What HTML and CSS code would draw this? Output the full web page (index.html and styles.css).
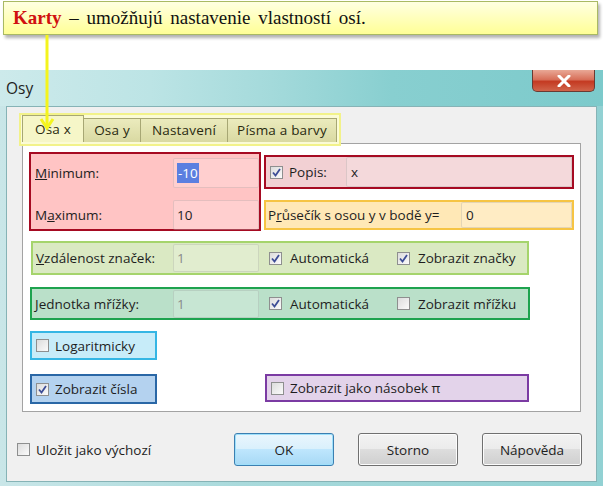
FILE: index.html
```html
<!DOCTYPE html>
<html lang="cs">
<head>
    <meta charset="UTF-8">
    <title>Osy</title>
    <link rel="stylesheet" href="styles.css">
</head>
<body>
    <div class="callout"><b>Karty</b> – umožňujú nastavenie vlastností osí.</div>
    <!-- pointer from callout to the tabs -->
    <svg class="arrow" width="16" height="98" viewBox="0 0 16 98">
        <line x1="8" y1="0" x2="8" y2="92" stroke="#f4f41e" stroke-width="3"/>
        <polyline points="2,84 8,93 14,84" fill="none" stroke="#f4f41e" stroke-width="3"/>
    </svg>

    <div class="window">
        <div class="titlebar">
            <span class="title">Osy</span>
            <div class="close">
                <svg width="16" height="12" viewBox="0 0 16 12">
                    <path d="M3 1 L13 11 M13 1 L3 11" stroke="#fff" stroke-width="3" stroke-linecap="round"/>
                </svg>
            </div>
        </div>
        <div class="client">
            <div class="tabs">
                <span class="tab active">Osa x</span>
                <span class="tab t-osy">Osa y</span>
                <span class="tab t-nast">Nastavení</span>
                <span class="tab t-pisma">Písma a barvy</span>
            </div>
            <div class="panel">
                <div class="row-top">
                    <div class="grp red minmax">
                        <div class="field">
                            <span class="lbl"><u>M</u>inimum:</span>
                            <span class="input"><span class="sel">-10</span></span>
                        </div>
                        <div class="field">
                            <span class="lbl">M<u>a</u>ximum:</span>
                            <span class="input">10</span>
                        </div>
                    </div>
                    <div class="col">
                        <div class="grp rose popis">
                            <span class="cb checked"><svg width="11" height="11" viewBox="0 0 11 11"><path d="M2 5.5 L4.5 8.5 L9 2" fill="none" stroke="#3d4d96" stroke-width="1.8"/></svg></span>
                            <span class="cb-text">Popis:</span>
                            <span class="input wide">x</span>
                        </div>
                        <div class="grp amber prusecik">
                            <span class="lbl">P<u>r</u>ůsečík s osou y v bodě y=</span>
                            <span class="input">0</span>
                        </div>
                    </div>
                </div>

                <div class="grp lime line">
                    <span class="lbl"><u>V</u>zdálenost značek:</span>
                    <span class="input off">1</span>
                    <span class="opt first"><span class="cb checked"><svg width="11" height="11" viewBox="0 0 11 11"><path d="M2 5.5 L4.5 8.5 L9 2" fill="none" stroke="#3d4d96" stroke-width="1.8"/></svg></span>Automatická</span>
                    <span class="opt"><span class="cb checked"><svg width="11" height="11" viewBox="0 0 11 11"><path d="M2 5.5 L4.5 8.5 L9 2" fill="none" stroke="#3d4d96" stroke-width="1.8"/></svg></span>Zobrazit značky</span>
                </div>

                <div class="grp green line grid-line">
                    <span class="lbl"><u>J</u>ednotka mřížky:</span>
                    <span class="input off">1</span>
                    <span class="opt first"><span class="cb checked"><svg width="11" height="11" viewBox="0 0 11 11"><path d="M2 5.5 L4.5 8.5 L9 2" fill="none" stroke="#3d4d96" stroke-width="1.8"/></svg></span>Automatická</span>
                    <span class="opt"><span class="cb"></span>Zobrazit mřížku</span>
                </div>

                <div class="grp cyan small log">
                    <span class="cb"></span><span class="cb-text">Logaritmicky</span>
                </div>

                <div class="row-bottom">
                    <div class="grp blue small">
                        <span class="cb checked"><svg width="11" height="11" viewBox="0 0 11 11"><path d="M2 5.5 L4.5 8.5 L9 2" fill="none" stroke="#3d4d96" stroke-width="1.8"/></svg></span><span class="cb-text">Zobrazit čísla</span>
                    </div>
                    <div class="grp purple pi">
                        <span class="cb"></span><span class="cb-text">Zobrazit jako násobek π</span>
                    </div>
                </div>
            </div>

            <div class="footer">
                <span class="opt"><span class="cb"></span>Uložit jako výchozí</span>
                <div class="buttons">
                    <button class="btn default">OK</button>
                    <button class="btn">Storno</button>
                    <button class="btn">Nápověda</button>
                </div>
            </div>
        </div>
    </div>
</body>
</html>
```

FILE: styles.css
```css
* {
    margin: 0;
    padding: 0;
    box-sizing: border-box;
}

body {
    width: 603px;
    height: 486px;
    overflow: hidden;
    background: #fff;
    font-family: "Open Sans", "Noto Sans", sans-serif;
    font-size: 13.5px;
    color: #1e1e1e;
    position: relative;
}

/* yellow note on top */
.callout {
    margin: 1px 5px 0 3px;
    height: 34px;
    border: 1px solid #a9b964;
    background: linear-gradient(#ffffe2, #ffff96);
    box-shadow: 2px 3px 3px rgba(0, 0, 0, 0.3);
    padding-left: 9px;
    font-family: "Liberation Serif", serif;
    font-size: 19px;
    line-height: 31px;
    word-spacing: 3px;
    color: #111;
}

.callout b {
    color: #d01010;
}

.arrow {
    position: absolute;
    left: 39px;
    top: 35px;
    z-index: 5;
}

/* dialog window */
.window {
    margin-top: 35px;
    height: 416px;
    background: linear-gradient(90deg, #c9e6e8, #a9dadc 40%, #92d1d3);
    padding: 0 6px 4px 6px;
    display: flex;
    flex-direction: column;
}

.titlebar {
    height: 36px;
    display: flex;
    justify-content: space-between;
    align-items: flex-start;
    margin: 0 -6px;
    padding: 0 8px 0 6px;
    background: linear-gradient(90deg, #cdeaeb 0%, #bce4e5 25%, #a4dadb 45%, #88cfd0 65%, #7ccacb 100%);
}

.title {
    font-size: 15.5px;
    line-height: 34px;
    padding-top: 1px;
}

.close {
    width: 63px;
    height: 22px;
    border: 1px solid #6a3a32;
    border-top: none;
    border-radius: 0 0 5px 5px;
    background: linear-gradient(#e9a896, #d8705a 45%, #c43a22 55%, #d0644a);
    display: flex;
    justify-content: center;
    align-items: center;
}

.client {
    flex: 1;
    background: #f0f0f0;
    border: 1px solid #86b3b6;
    display: flex;
    flex-direction: column;
}

/* tabs */
.tabs {
    align-self: flex-start;
    display: flex;
    align-items: flex-end;
    margin: 6px 0 -3px 12px;
    height: 33px;
    padding: 0 2px 2px 1px;
    border: 2px solid #f2f28a;
    background: #fbfbd6;
    position: relative;
    z-index: 2;
}

.tab {
    height: 24px;
    line-height: 22px;
    text-align: center;
    background: linear-gradient(#ebebbd, #d9d9a2);
    border: 1px solid #a7a774;
    border-bottom: none;
    margin-left: -1px;
    color: #2a2a10;
    letter-spacing: 0.2px;
}

.t-osy { width: 58px; }
.t-nast { width: 88px; }
.t-pisma { width: 110px; }

.tab.active {
    height: 27px;
    line-height: 27px;
    width: 62px;
    background: #f6f6c8;
    margin-left: 0;
    position: relative;
    z-index: 1;
}

.panel {
    margin: 0 15px;
    height: 269px;
    background: #fff;
    border: 1px solid #a3a3a3;
    padding: 8px 0 0 6px;
    display: flex;
    flex-direction: column;
}

.grp {
    border: 2px solid;
    display: flex;
    align-items: center;
}

.red { background: #ffc4c4; border-color: #a60a22; }
.rose { background: #f2d0d3; border-color: #a60a22; }
.amber { background: #ffe8b6; border-color: #f6c443; }
.lime { background: #dae9c3; border-color: #a5d46c; }
.green { background: #bae0c9; border-color: #1ea34f; }
.cyan { background: #c7ecf9; border-color: #35b6e4; }
.blue { background: #b4d2ef; border-color: #2a67a6; }
.purple { background: #e3d3ea; border-color: #7b3ba3; }

.input {
    display: flex;
    align-items: center;
    width: 86px;
    height: 30px;
    padding-left: 3px;
    border: 1px solid rgba(120, 120, 120, 0.2);
    border-radius: 2px;
    background: rgba(255, 255, 255, 0.2);
}

.input.off {
    color: #8a8a8a;
}

.sel {
    background: #5b7fe0;
    color: #fff;
    padding: 1px 1px;
    line-height: 18px;
}

.row-top {
    display: flex;
    gap: 3px;
}

.minmax {
    width: 232px;
    height: 79px;
    flex-direction: column;
    align-items: stretch;
    padding-top: 4px;
    gap: 12px;
}

.field {
    display: flex;
    align-items: center;
}

.field .lbl {
    width: 142px;
    padding-left: 4px;
}

.col {
    display: flex;
    flex-direction: column;
    margin-top: 3px;
    gap: 11px;
}

.popis {
    width: 310px;
    height: 34px;
    padding-left: 4px;
}

.popis .cb-text {
    width: 56px;
}

.input.wide {
    width: 226px;
    margin-left: auto;
    padding-left: 4px;
}

.prusecik {
    width: 310px;
    height: 30px;
    padding-left: 2px;
    justify-content: space-between;
}

.prusecik .input {
    width: 111px;
    height: 26px;
    padding-left: 4px;
}

/* checkbox */
.cb {
    width: 13px;
    height: 13px;
    border: 1px solid #8e8f8f;
    background: linear-gradient(135deg, #dcdcdc, #fbfbfb);
    display: inline-flex;
    justify-content: center;
    align-items: center;
    flex-shrink: 0;
}

.cb-text {
    margin-left: 6px;
}

.opt {
    display: flex;
    align-items: center;
    gap: 8px;
}

.line {
    margin-top: 10px;
    margin-left: 2px;
    width: 498px;
    height: 34px;
}

.line .lbl {
    width: 140px;
    padding-left: 3px;
}

.line .input {
    height: 28px;
}

.line .opt {
    width: 128px;
}

.line .opt.first {
    margin-left: 10px;
}

.grid-line {
    margin-top: 12px;
    margin-left: 1px;
    width: 500px;
    height: 33px;
}

.grid-line .lbl {
    width: 141px;
}

.small {
    width: 127px;
    height: 29px;
    padding-left: 4px;
}

.log {
    margin-top: 11px;
    margin-left: 1px;
}

.row-bottom {
    display: flex;
    align-items: flex-start;
    margin-top: 14px;
    margin-left: 1px;
}

.row-bottom .small {
    height: 30px;
}

.pi {
    margin-left: 108px;
    width: 264px;
    height: 28px;
    padding-left: 4px;
}

/* bottom buttons */
.footer {
    display: flex;
    align-items: center;
    margin-top: 21px;
    padding: 0 14px 0 10px;
}

.footer .opt {
    gap: 6px;
}

.buttons {
    margin-left: auto;
    display: flex;
    gap: 24px;
}

.btn {
    width: 100px;
    height: 33px;
    font-family: inherit;
    font-size: 13.5px;
    color: #1e1e1e;
    border: 1px solid #707070;
    border-radius: 3px;
    background: linear-gradient(#f3f3f3 0%, #ebebeb 49%, #dddddd 50%, #cfcfcf 100%);
    box-shadow: inset 0 0 0 1px #fcfcfc;
}

.btn.default {
    border-color: #3c7fb1;
    background: linear-gradient(#eaf6fd 0%, #d9f0fc 49%, #bee6fd 50%, #a7d9f5 100%);
    box-shadow: inset 0 0 0 1px #9ee0fb;
}
```
